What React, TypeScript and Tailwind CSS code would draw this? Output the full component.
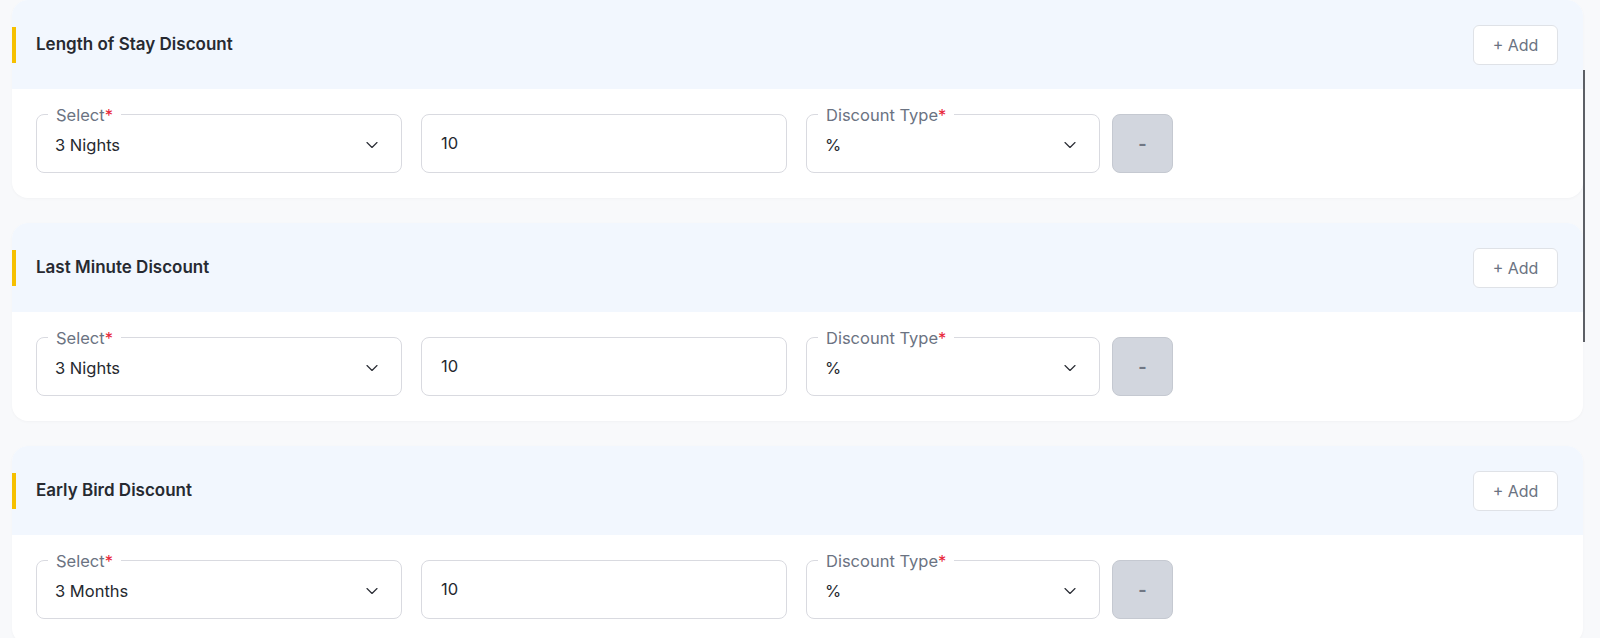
import { ChevronDown } from "lucide-react";

type Row = {
  title: string;
  select: string;
  amount: string;
  type: string;
};

const rows: Row[] = [
  { title: "Length of Stay Discount", select: "3 Nights", amount: "10", type: "%" },
  { title: "Last Minute Discount", select: "3 Nights", amount: "10", type: "%" },
  { title: "Early Bird Discount", select: "3 Months", amount: "10", type: "%" },
];

const FloatingSelect = ({ label, value, width }: { label: string; value: string; width: string }) => (
  <div className={`relative h-[59px] ${width} rounded-lg border border-[#d9dae0] bg-white`}>
    <span className="absolute -top-[10px] left-[11px] bg-white px-2 text-[16.5px] leading-5 text-[#6b7382]">
      {label}
      <span className="text-[#e8263a]">*</span>
    </span>
    <div className="flex h-full items-center justify-between pl-[18px] pr-[19px] pt-[3px]">
      <span className="text-[16.5px] text-[#26292f]">{value}</span>
      <ChevronDown className="h-[20px] w-[20px] text-[#2b2e35]" strokeWidth={1.4} />
    </div>
  </div>
);

const DiscountCard = ({ row }: { row: Row }) => (
  <div className="overflow-hidden rounded-2xl bg-white shadow-[0_1px_3px_rgba(0,0,0,0.03)]">
    <div className="flex h-[89px] items-center justify-between bg-[#f2f7fe] pr-[25px]">
      <div className="flex items-center">
        <div className="h-[36px] w-[4px] bg-[#f6c000]" />
        <h2 className="ml-[20px] text-[17px] font-semibold text-[#272a31]">{row.title}</h2>
      </div>
      <button className="h-[40px] w-[85px] rounded-md border border-[#dfe2e7] bg-white text-[16px] text-[#6b7382]">
        + Add
      </button>
    </div>
    <div className="flex items-center px-[24px] py-[25px]">
      <FloatingSelect label="Select" value={row.select} width="w-[366px]" />
      <div className="ml-[19px] flex h-[59px] w-[366px] items-center rounded-lg border border-[#d9dae0] bg-white pl-[19px]">
        <span className="text-[16.5px] text-[#26292f]">{row.amount}</span>
      </div>
      <div className="ml-[19px]">
        <FloatingSelect label="Discount Type" value={row.type} width="w-[294px]" />
      </div>
      <button className="ml-[12px] flex h-[59px] w-[61px] items-center justify-center rounded-lg border border-[#c5c9d1] bg-[#d2d6de] text-[18px] font-bold text-[#717784]">
        -
      </button>
    </div>
  </div>
);

export default function App() {
  return (
    <div
      className="relative h-[638px] w-[1600px] overflow-hidden bg-[#f8f9fb] pl-[12px] pr-[17px]"
      style={{ fontFamily: "Inter, 'Noto Sans', sans-serif" }}
    >
      <div className="flex flex-col gap-[25px]">
        {rows.map((row) => (
          <DiscountCard key={row.title} row={row} />
        ))}
      </div>
      <div className="absolute left-[1583px] top-[70px] h-[272px] w-[2px] bg-[#5d6066]" />
    </div>
  );
}
